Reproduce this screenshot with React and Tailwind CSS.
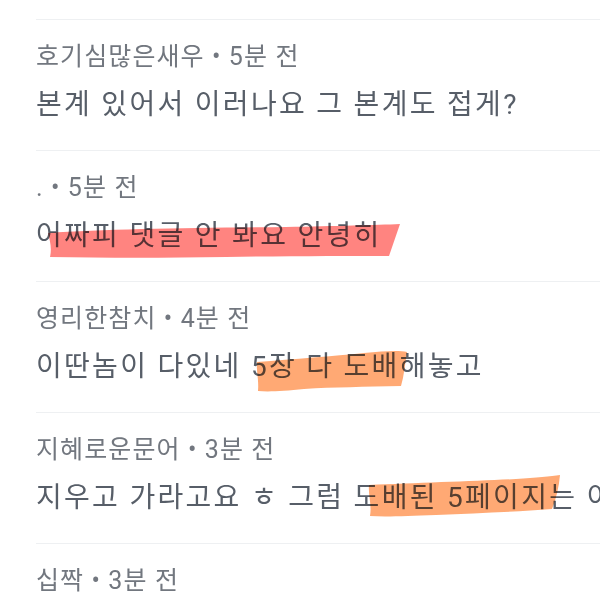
import React from "react";

const font = { fontFamily: 'Roboto, "Noto Sans CJK KR", sans-serif' };

function Row({ name, time, body, children }) {
  return (
    <div className="pl-[36px]">
      <div className="relative h-[131px] border-t border-[#eef0f2] overflow-visible">
        <div className="pt-[21px] h-[53px] text-[25px] leading-[32px] tracking-[1.1px] text-[#72777f] whitespace-nowrap">
          {name} • {time}
        </div>
        <div className="mt-[14px] h-[36px] text-[28px] leading-[36px] tracking-[2.3px] text-[#575e68] whitespace-nowrap">
          {body}
        </div>
        {children}
      </div>
    </div>
  );
}

export default function App() {
  return (
    <div className="w-[600px] h-[600px] overflow-hidden bg-white" style={font}>
      <div className="h-[19px]" />
      <Row name="호기심많은새우" time="5분 전" body="본계 있어서 이러나요 그 본계도 접게?" />
      <Row name="." time="5분 전" body="어짜피 댓글 안 봐요 안녕히">
        <svg className="absolute left-[10px] top-[72px] mix-blend-multiply pointer-events-none" width="356" height="36" viewBox="0 0 356 36">
          <path d="M2 10 C60 6 150 5 240 4 C290 3 330 2 354 1 L343 33 C300 33 240 33 180 34 C120 35 60 35 4 34 C6 25 4 18 2 10 Z" fill="#ff6f6a" fillOpacity="0.85" />
        </svg>
      </Row>
      <Row name="영리한참치" time="4분 전" body="이딴놈이 다있네 5장 다 도배해놓고">
        <svg className="absolute left-[218px] top-[68px] mix-blend-multiply pointer-events-none" width="156" height="44" viewBox="0 0 156 44">
          <path d="M3 12 C40 9 80 6 110 3 C130 1 145 0 153 2 C151 14 150 26 147 36 C110 37 80 37 50 39 C30 41 15 42 4 41 C5 30 2 20 3 12 Z" fill="#ff9a5c" fillOpacity="0.85" />
        </svg>
      </Row>
      <Row name="지혜로운문어" time="3분 전" body="지우고 가라고요 ㅎ 그럼 도배된 5페이지는 이제 어떡해요">
        <svg className="absolute left-[330px] top-[62px] mix-blend-multiply pointer-events-none" width="196" height="44" viewBox="0 0 196 44">
          <path d="M3 10 C50 8 110 6 150 4 C170 3 185 1 194 0 C193 12 190 24 186 34 C150 37 110 38 70 40 C40 41 20 42 4 41 C6 30 2 20 3 10 Z" fill="#ff9a5c" fillOpacity="0.85" />
        </svg>
      </Row>
      <Row name="십짝" time="3분 전" body="" />
    </div>
  );
}
